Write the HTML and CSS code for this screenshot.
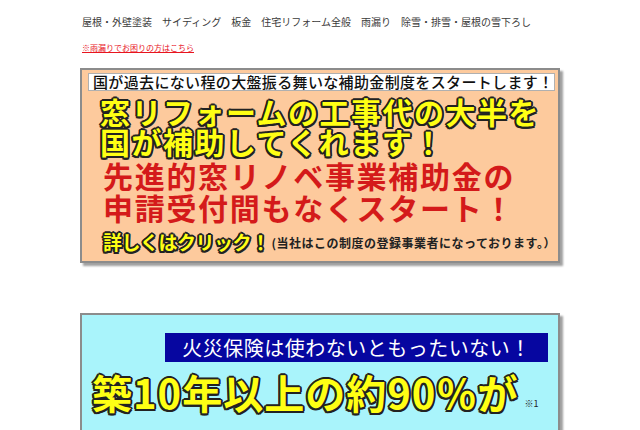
FILE: index.html
```html
<!DOCTYPE html>
<html lang="ja">
<head>
<meta charset="utf-8">
<link rel="stylesheet" href="styles.css">
</head>
<body>
<div class="page">
  <nav class="nav">
    <span>屋根・外壁塗装</span>
    <span>サイディング</span>
    <span>板金</span>
    <span>住宅リフォーム全般</span>
    <span>雨漏り</span>
    <span>除雪・排雪・屋根の雪下ろし</span>
  </nav>
  <div class="notice-row"><a class="notice" href="#">※雨漏りでお困りの方はこちら</a></div>

  <div class="banner peach">
    <div class="lead">国が過去にない程の大盤振る舞いな補助金制度をスタートします！</div>
    <div class="yellow big30 top">窓リフォームの工事代の大半を</div>
    <div class="yellow big30">国が補助してくれます！</div>
    <div class="red first">先進的窓リノベ事業補助金の</div>
    <div class="red">申請受付間もなくスタート！</div>
    <div class="click"><span class="yellow small">詳しくはクリック！</span><span class="note">(当社はこの制度の登録事業者になっております。）</span></div>
  </div>

  <div class="banner cyan">
    <div class="navy">火災保険は使わないともったいない！</div>
    <div class="yellow big40 top">築10年以上の約90％が<span class="mark">※1</span></div>
    <div class="yellow big40">保険金の受け取り対象です</div>
  </div>
</div>
</body>
</html>
```
FILE: styles.css
```css
html, body {
  margin: 0;
  padding: 0;
  background: #fff;
  overflow: hidden;
}
body {
  font-family: "Noto Sans CJK JP", "Noto Sans", sans-serif;
  color: #333;
}
.page {
  padding: 15px 0 0 80px;
  width: 482px;
}
.nav {
  display: flex;
  gap: 10px;
  padding-left: 2px;
  font-size: 10px;
  line-height: 14px;
  color: #3a3a3a;
  white-space: nowrap;
}
.notice-row {
  margin: 14px 0 0 2px;
  font-size: 8px;
  line-height: 10px;
}
.notice {
  color: #e8141e;
  text-decoration: underline;
}
.banner {
  margin-top: 15px;
  width: 476px;
  border: 2px solid #8c8c8c;
  box-shadow: 3px 3px 2px #a0a0a0;
  overflow: hidden;
}
.peach {
  background: #fdca9d;
  padding: 3px 0 6px 0;
}
.lead {
  margin: 0 3px 0 6px;
  background: #fff;
  border: 1px solid #b0b0b0;
  height: 16px;
  font-size: 15px;
  font-weight: 500;
  line-height: 16px;
  padding-left: 4px;
  letter-spacing: 0.35px;
  color: #111;
  white-space: nowrap;
}
.yellow {
  color: #ffff14;
  font-weight: 700;
  white-space: nowrap;
  text-shadow:
    -1.5px -1.5px 0 #222, 0 -1.5px 0 #222, 1.5px -1.5px 0 #222,
    -1.5px 0 0 #222, 1.5px 0 0 #222,
    -1.5px 1.5px 0 #222, 0 1.5px 0 #222, 1.5px 1.5px 0 #222,
    0 2px 0 #222, 2px 0 0 #222, -2px 0 0 #222, 0 -2px 0 #222;
}
.big30 {
  font-size: 30px;
  line-height: 30px;
  padding-left: 18px;
  letter-spacing: 1.5px;
}
.big30.top {
  margin-top: 5px;
}
.red {
  color: #d41a1a;
  font-size: 30px;
  font-weight: 700;
  line-height: 32px;
  padding-left: 21px;
  letter-spacing: 1.7px;
  white-space: nowrap;
}
.red.first {
  margin-top: 3px;
}
.click {
  margin-top: 6px;
  padding-left: 21px;
  display: flex;
  align-items: center;
  line-height: 24px;
  white-space: nowrap;
}
.small {
  font-size: 19px;
  letter-spacing: -0.5px;
}
.note {
  font-size: 12px;
  font-weight: 700;
  color: #222;
  margin-left: 2px;
  padding-top: 2px;
  letter-spacing: 0.5px;
}
.cyan {
  margin-top: 50px;
  background: #a9f4fb;
  padding-top: 18px;
  height: 200px;
}
.navy {
  margin-left: 83px;
  width: 383px;
  height: 29px;
  background: #0606a0;
  color: #fff;
  font-size: 20px;
  line-height: 29px;
  letter-spacing: 0.5px;
  text-align: center;
  white-space: nowrap;
}
.big40 {
  font-size: 40px;
  line-height: 48px;
  padding-left: 10px;
  letter-spacing: 1px;
}
.big40.top {
  margin-top: 6px;
}
.mark {
  font-size: 9px;
  color: #222;
  text-shadow: none;
  font-weight: 400;
  margin-left: 6px;
  letter-spacing: 0;
  vertical-align: 2px;
}
```
